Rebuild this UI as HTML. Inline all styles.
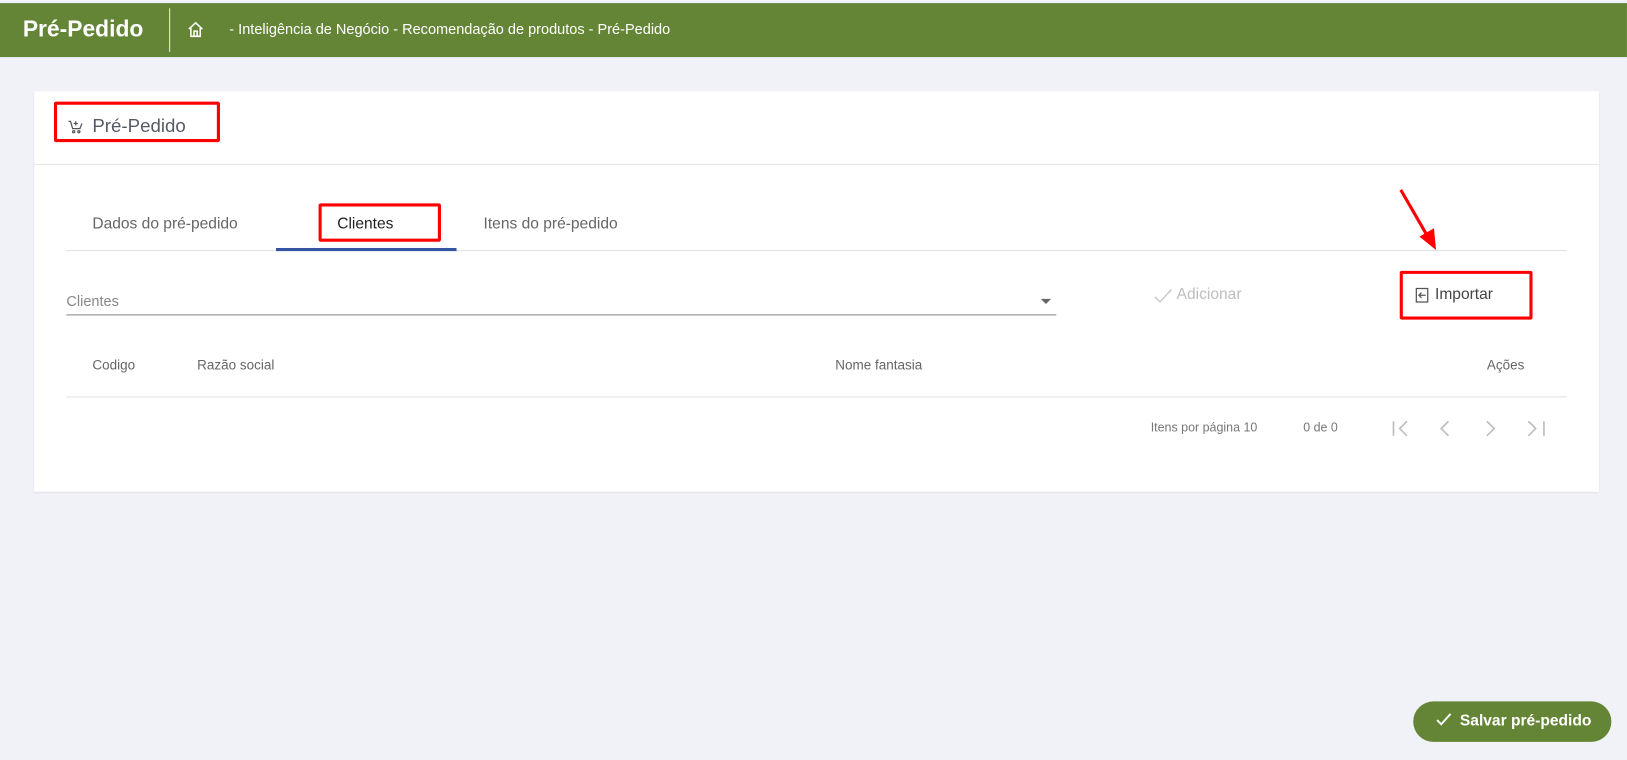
<!DOCTYPE html>
<html><head><meta charset="utf-8"><style>
*{margin:0;padding:0;box-sizing:border-box}
body{width:1627px;height:759px;background:#f1f2f7;font-family:"Liberation Sans",sans-serif;position:relative;overflow:hidden}
#w{position:absolute;left:0;top:0;width:1568px;height:732px;transform:scale(1.0376);transform-origin:0 0}
.abs{position:absolute}
.top{left:0;top:3px;width:1568px;height:52px;background:#658536}
.card{left:33px;top:88px;width:1508px;height:386px;background:#fff;box-shadow:0 1px 2px rgba(0,0,0,.08)}
.red{border:3px solid #f00;border-radius:2px}
.t{white-space:nowrap}
</style></head><body><div id="w">
<div class="abs top"></div>
<div class="abs t" style="left:22px;top:15px;font-size:22px;color:#fff;font-weight:bold">Pré-Pedido</div>
<div class="abs" style="left:163px;top:8px;width:1px;height:42px;background:#e8eee0"></div>
<svg class="abs" style="left:180px;top:20px" width="17" height="17" viewBox="0 0 17 17" fill="none" stroke="#fff" stroke-width="1.5"><path d="M2 8 L8.5 2 L15 8 M4 7 V15 H13 V7 M7 15 V10 H10 V15"/></svg>
<div class="abs t" style="left:221px;top:20px;font-size:14px;color:#fff">- Inteligência de Negócio - Recomendação de produtos - Pré-Pedido</div>

<div class="abs card"></div>
<div class="abs" style="left:33px;top:158px;width:1508px;height:1px;background:#e6e6e6"></div>
<div class="abs red" style="left:52px;top:98px;width:160px;height:39px"></div>
<svg class="abs" style="left:66px;top:116px" width="14" height="13" viewBox="0 0 14 13" fill="none" stroke="#555" stroke-width="1.2"><path d="M0 1 H2 L4 8 H11 L13 3 M7 1 V5 M5 3 H9"/><circle cx="5" cy="11" r="1"/><circle cx="10" cy="11" r="1"/></svg>
<div class="abs t" style="left:89px;top:111px;font-size:18px;color:#555b66">Pré-Pedido</div>

<div class="abs t" style="left:89px;top:207px;font-size:15px;color:#666">Dados do pré-pedido</div>
<div class="abs red" style="left:307px;top:196px;width:118px;height:37px"></div>
<div class="abs t" style="left:325px;top:207px;font-size:15px;color:#222">Clientes</div>
<div class="abs t" style="left:466px;top:207px;font-size:15px;color:#666">Itens do pré-pedido</div>
<div class="abs" style="left:64px;top:241px;width:1446px;height:1px;background:#e0e0e0"></div>
<div class="abs" style="left:266px;top:239px;width:174px;height:3px;background:#3353a3"></div>

<div class="abs t" style="left:64px;top:282px;font-size:14px;color:#888">Clientes</div>
<div class="abs" style="left:1003px;top:288px;width:0;height:0;border-left:5px solid transparent;border-right:5px solid transparent;border-top:5px solid #666"></div>
<div class="abs" style="left:64px;top:303px;width:954px;height:1px;background:#888"></div>

<svg class="abs" style="left:1112px;top:278px" width="18" height="14" viewBox="0 0 18 14" fill="none" stroke="#c4c4c4" stroke-width="1.3"><path d="M1 8 L6 13 L17 1"/></svg>
<div class="abs t" style="left:1134px;top:275px;font-size:15px;color:#bdbdbd">Adicionar</div>
<div class="abs red" style="left:1349px;top:261px;width:128px;height:47px"></div>
<svg class="abs" style="left:1364px;top:277px" width="13" height="15" viewBox="0 0 13 15" fill="none" stroke="#555" stroke-width="1.2"><path d="M1 1 H12 V14 H1 Z M10 7.5 H4 M6 5 L3.5 7.5 L6 10"/></svg>
<div class="abs t" style="left:1383px;top:275px;font-size:15px;color:#444">Importar</div>

<div class="abs t" style="left:89px;top:344px;font-size:13px;color:#666">Codigo</div>
<div class="abs t" style="left:190px;top:344px;font-size:13px;color:#666">Razão social</div>
<div class="abs t" style="left:805px;top:344px;font-size:13px;color:#666">Nome fantasia</div>
<div class="abs t" style="left:1433px;top:344px;font-size:13px;color:#666">Ações</div>
<div class="abs" style="left:64px;top:382px;width:1446px;height:1px;background:#e0e0e0"></div>

<div class="abs t" style="left:1109px;top:405px;font-size:12px;color:#777">Itens por página 10</div>
<div class="abs t" style="left:1256px;top:405px;font-size:12px;color:#777">0 de 0</div>
<svg class="abs" style="left:1340px;top:403px" width="152" height="20" viewBox="0 0 152 20" fill="none" stroke="#bdbdbd" stroke-width="1.6"><path d="M3 3 V17 M16 3 L9 10 L16 17 M56 3 L49 10 L56 17 M93 3 L100 10 L93 17 M133 3 L140 10 L133 17 M148 3 V17"/></svg>

<svg class="abs" style="left:1346px;top:180px" width="42" height="62" viewBox="0 0 42 62"><path d="M4 3 L30 48" stroke="#f00" stroke-width="3"/><path d="M22 48 L38 61 L36 40 Z" fill="#f00"/></svg>

<div class="abs" style="left:1362px;top:676px;width:191px;height:39px;border-radius:20px;background:#658536"></div>
<svg class="abs" style="left:1384px;top:687px" width="15" height="13" viewBox="0 0 15 13" fill="none" stroke="#fff" stroke-width="1.8"><path d="M1 7 L5 11 L14 1"/></svg>
<div class="abs t" style="left:1407px;top:686px;font-size:15px;color:#fff;font-weight:bold">Salvar pré-pedido</div>
</div></body></html>
